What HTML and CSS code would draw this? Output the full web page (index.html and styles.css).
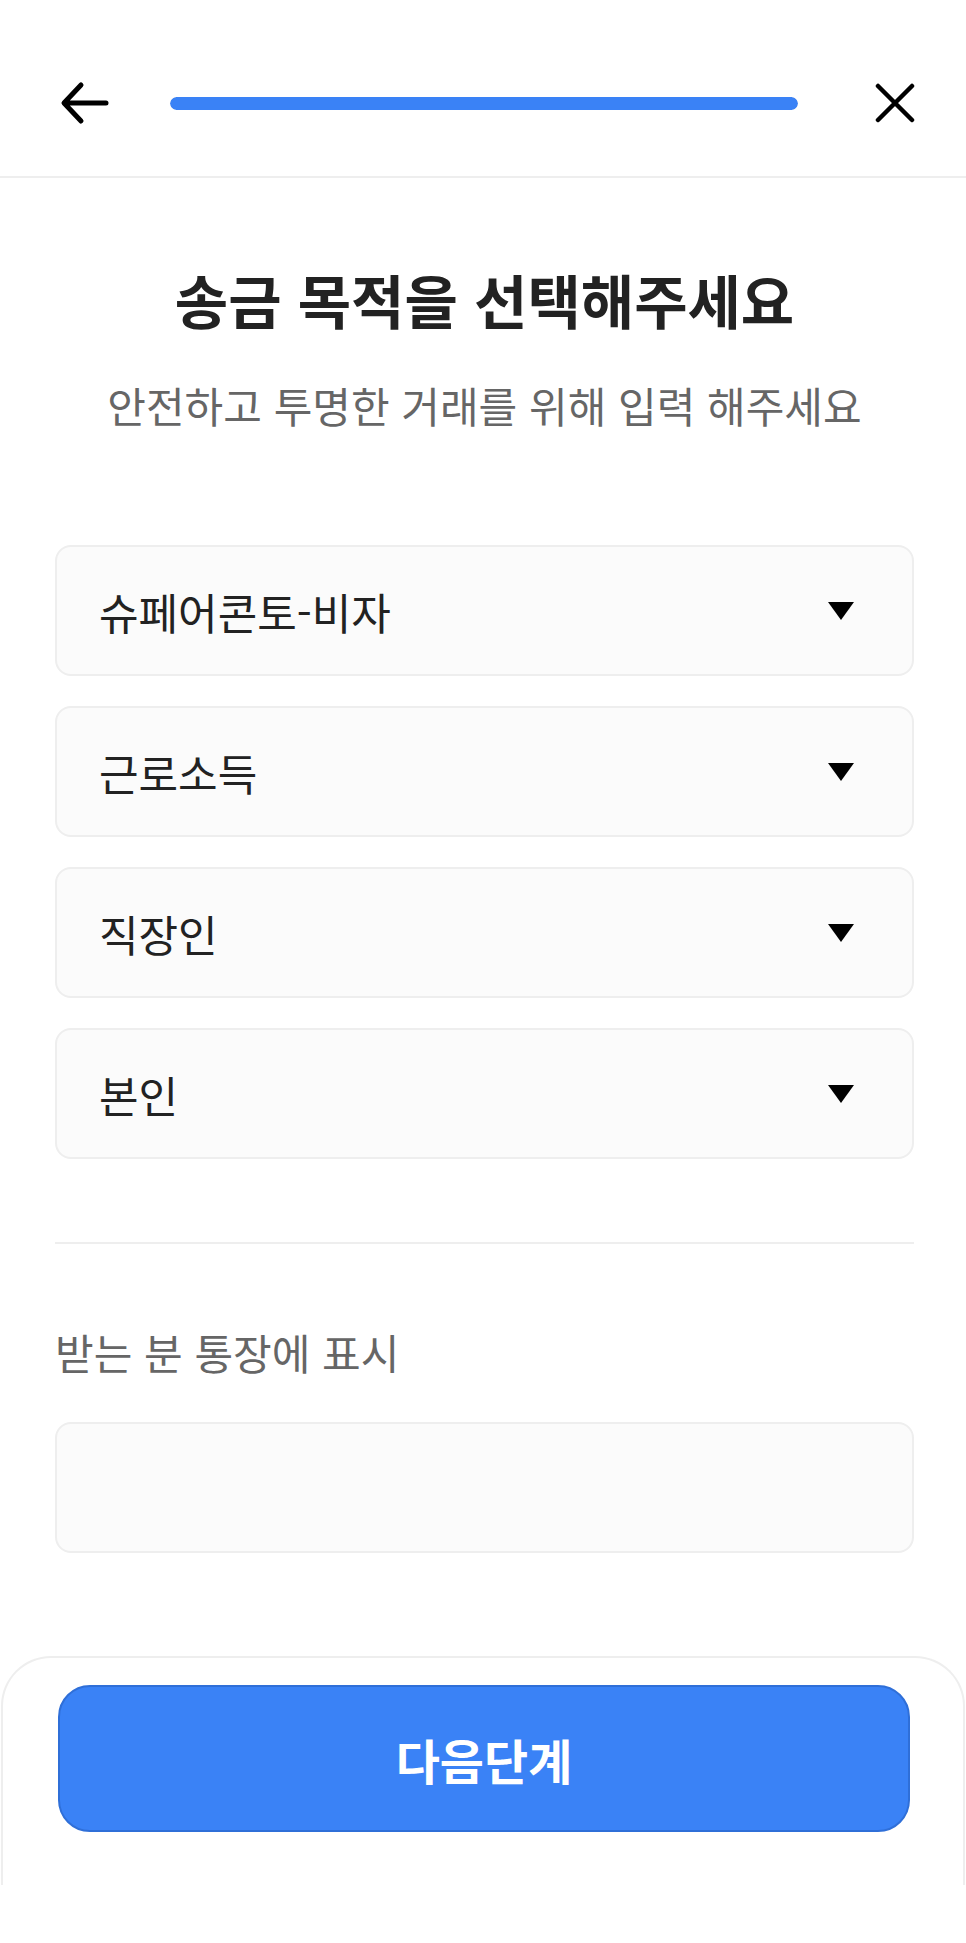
FILE: index.html
```html
<!DOCTYPE html>
<html lang="ko">
<head>
    <meta charset="UTF-8">
    <meta name="viewport" content="width=device-width, initial-scale=1.0">
    <title>송금 목적 선택</title>
    <link rel="stylesheet" href="styles.css">
</head>
<body>
    <header class="topbar">
        <button class="icon-btn back" aria-label="뒤로">
            <svg width="50" height="44" viewBox="0 0 50 44">
                <path d="M46 22H5M21 4L4 22L21 40" fill="none" stroke="#000" stroke-width="5" stroke-linecap="round" stroke-linejoin="round"/>
            </svg>
        </button>
        <div class="progress"><div class="progress-fill" style="width: 100%"></div></div>
        <button class="icon-btn close" aria-label="닫기">
            <svg width="40" height="40" viewBox="0 0 40 40">
                <path d="M3 3L37 37M37 3L3 37" fill="none" stroke="#000" stroke-width="4.5" stroke-linecap="round"/>
            </svg>
        </button>
    </header>

    <main class="content">
        <h1 class="title">송금 목적을 선택해주세요</h1>
        <p class="subtitle">안전하고 투명한 거래를 위해 입력 해주세요</p>

        <div class="select-list">
            <div class="select-box">
                <span>슈페어콘토-비자</span>
                <svg class="caret" width="28" height="20" viewBox="0 0 28 20"><polygon points="1,1 27,1 14,19" fill="#000"/></svg>
            </div>
            <div class="select-box">
                <span>근로소득</span>
                <svg class="caret" width="28" height="20" viewBox="0 0 28 20"><polygon points="1,1 27,1 14,19" fill="#000"/></svg>
            </div>
            <div class="select-box">
                <span>직장인</span>
                <svg class="caret" width="28" height="20" viewBox="0 0 28 20"><polygon points="1,1 27,1 14,19" fill="#000"/></svg>
            </div>
            <div class="select-box">
                <span>본인</span>
                <svg class="caret" width="28" height="20" viewBox="0 0 28 20"><polygon points="1,1 27,1 14,19" fill="#000"/></svg>
            </div>
        </div>

        <hr class="divider">

        <label class="field-label" for="memo">받는 분 통장에 표시</label>
        <input class="text-box" id="memo" type="text">
    </main>

    <footer class="bottom-panel">
        <button class="next-btn">다음단계</button>
    </footer>
</body>
</html>
```

FILE: styles.css
```css
* {
    margin: 0;
    padding: 0;
    box-sizing: border-box;
}

body {
    font-family: "Noto Sans CJK KR", "Noto Sans", sans-serif;
    background-color: #fff;
    color: #222;
    width: 966px;
}

.topbar {
    display: flex;
    align-items: center;
    height: 178px;
    padding: 30px 51px 0 62px;
    border-bottom: 2px solid #eee;
}

.icon-btn {
    border: none;
    background: none;
    display: flex;
    align-items: center;
    justify-content: center;
}

.back {
    width: 50px;
    margin-left: -2px;
}

.close {
    width: 40px;
    margin-left: 77px;
}

.progress {
    flex: 1;
    height: 13px;
    margin-left: 60px;
    border-radius: 7px;
    background-color: #e6e6e6;
    overflow: hidden;
}

.progress-fill {
    height: 100%;
    border-radius: 7px;
    background-color: #3a82f6;
}

.content {
    padding: 0 52px 0 55px;
}

.title {
    margin-top: 81px;
    font-size: 58px;
    line-height: 80px;
    font-weight: bold;
    text-align: center;
    color: #222;
}

.subtitle {
    margin-top: 38px;
    font-size: 42px;
    line-height: 56px;
    text-align: center;
    color: #666;
}

.select-list {
    display: flex;
    flex-direction: column;
    gap: 30px;
    margin-top: 112px;
}

.select-box {
    display: flex;
    align-items: center;
    justify-content: space-between;
    height: 131px;
    padding: 0 57px 0 42px;
    border: 2px solid #eee;
    border-radius: 16px;
    background-color: #fbfbfb;
    font-size: 43px;
    color: #222;
}

.caret {
    display: block;
}

.divider {
    margin-top: 83px;
    border: none;
    border-top: 2px solid #eee;
}

.field-label {
    display: block;
    margin-top: 80px;
    font-size: 42px;
    line-height: 56px;
    color: #666;
}

.text-box {
    display: block;
    width: 100%;
    height: 131px;
    margin-top: 42px;
    border: 2px solid #eee;
    border-radius: 16px;
    background-color: #fbfbfb;
    font-family: inherit;
    font-size: 43px;
    padding: 0 42px;
    outline: none;
}

.bottom-panel {
    margin-top: 103px;
    margin-left: 1px;
    margin-right: 1px;
    height: 229px;
    padding: 27px 53px 0 55px;
    border: 2px solid #eee;
    border-bottom: none;
    border-radius: 50px 50px 0 0;
    background-color: #fff;
}

.next-btn {
    display: block;
    width: 100%;
    height: 147px;
    border: 2px solid #2f6fd8;
    border-radius: 32px;
    background-color: #3a82f6;
    color: #fff;
    font-family: inherit;
    font-size: 48px;
    font-weight: bold;
}
```
